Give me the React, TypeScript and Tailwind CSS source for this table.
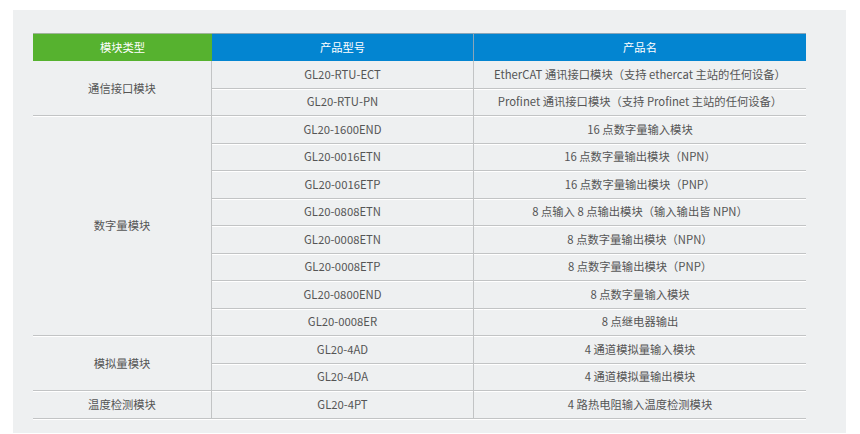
import React from 'react';

type Group = { type: string; rows: [string, string][] };

const GROUPS: Group[] = [
  {
    type: '通信接口模块',
    rows: [
      ['GL20-RTU-ECT', 'EtherCAT 通讯接口模块（支持 ethercat 主站的任何设备）'],
      ['GL20-RTU-PN', 'Profinet 通讯接口模块（支持 Profinet 主站的任何设备）'],
    ],
  },
  {
    type: '数字量模块',
    rows: [
      ['GL20-1600END', '16 点数字量输入模块'],
      ['GL20-0016ETN', '16 点数字量输出模块（NPN）'],
      ['GL20-0016ETP', '16 点数字量输出模块（PNP）'],
      ['GL20-0808ETN', '8 点输入 8 点输出模块（输入输出皆 NPN）'],
      ['GL20-0008ETN', '8 点数字量输出模块（NPN）'],
      ['GL20-0008ETP', '8 点数字量输出模块（PNP）'],
      ['GL20-0800END', '8 点数字量输入模块'],
      ['GL20-0008ER', '8 点继电器输出'],
    ],
  },
  {
    type: '模拟量模块',
    rows: [
      ['GL20-4AD', '4 通道模拟量输入模块'],
      ['GL20-4DA', '4 通道模拟量输出模块'],
    ],
  },
  {
    type: '温度检测模块',
    rows: [['GL20-4PT', '4 路热电阻输入温度检测模块']],
  },
];

// row-span classes written out so tailwind picks them up
const SPAN: Record<number, string> = {
  1: 'row-span-1',
  2: 'row-span-2',
  8: 'row-span-8',
};

const line = 'border-b border-[#c2c4c5] shadow-[0_1px_0_#ffffff]';

export default function App() {
  return (
    <div className="h-[434px] w-[860px] bg-white pl-[13px] pt-[10px]">
      <div
        className="h-[423px] w-[833px] bg-[#eef0f1] pl-[20px] pt-[23px] text-[11.3px] text-[#555555]"
        style={{ fontFamily: '"Noto Sans CJK SC", "Noto Sans", sans-serif' }}
      >
        <div className="grid w-[773px] grid-cols-[179px_261px_333px] grid-rows-[28px_repeat(13,27.5px)]">
          <div className="flex items-center justify-center border-t border-[#9fb49a] bg-[#56b22f] text-white">
            模块类型
          </div>
          <div className="flex items-center justify-center border-t border-[#8aa5b8] bg-[#0385d1] text-white">
            产品型号
          </div>
          <div className="flex items-center justify-center border-l border-t border-[#8aa5b8] bg-[#0385d1] text-white">
            产品名
          </div>

          {GROUPS.map((g) => (
            <React.Fragment key={g.type}>
              <div
                className={`${SPAN[g.rows.length]} col-start-1 flex items-center justify-center border-r border-[#c2c4c5] ${line}`}
              >
                {g.type}
              </div>
              {g.rows.map(([model, name]) => (
                <React.Fragment key={model}>
                  <div className={`col-start-2 flex items-center justify-center ${line}`}>{model}</div>
                  <div className={`col-start-3 flex items-center justify-center border-l border-[#c2c4c5] ${line}`}>
                    {name}
                  </div>
                </React.Fragment>
              ))}
            </React.Fragment>
          ))}
        </div>
      </div>
    </div>
  );
}
